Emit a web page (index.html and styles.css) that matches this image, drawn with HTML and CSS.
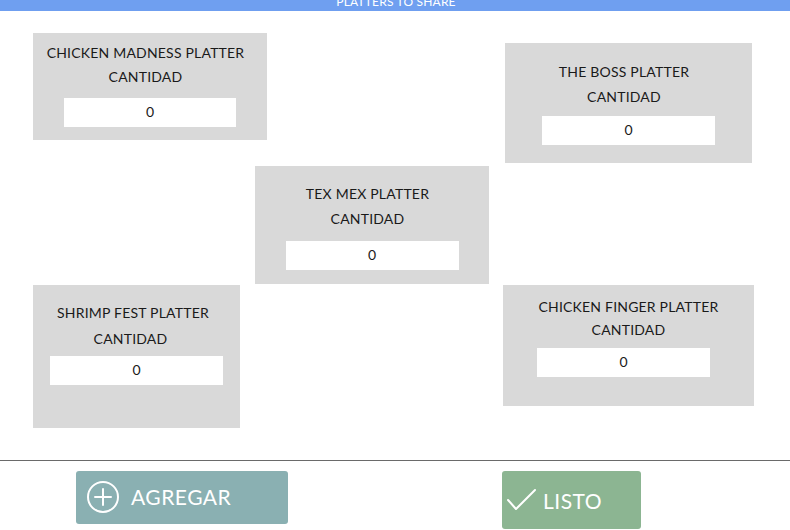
FILE: index.html
```html
<!DOCTYPE html>
<html lang="es">
<head>
<meta charset="utf-8">
<title>Platters to share</title>
<link rel="stylesheet" href="styles.css">
</head>
<body>
<header class="topbar"><span class="topbar-title">PLATTERS TO SHARE</span></header>
<main class="board">
  <div class="row row-1">
    <section class="card card-1">
      <div class="card-title">CHICKEN MADNESS PLATTER</div>
      <div class="card-label">CANTIDAD</div>
      <div class="qty">0</div>
    </section>
    <section class="card card-2">
      <div class="card-title">THE BOSS PLATTER</div>
      <div class="card-label">CANTIDAD</div>
      <div class="qty">0</div>
    </section>
  </div>
  <div class="row row-2">
    <section class="card card-3">
      <div class="card-title">TEX MEX PLATTER</div>
      <div class="card-label">CANTIDAD</div>
      <div class="qty">0</div>
    </section>
  </div>
  <div class="row row-3">
    <section class="card card-4">
      <div class="card-title">SHRIMP FEST PLATTER</div>
      <div class="card-label">CANTIDAD</div>
      <div class="qty">0</div>
    </section>
    <section class="card card-5">
      <div class="card-title">CHICKEN FINGER PLATTER</div>
      <div class="card-label">CANTIDAD</div>
      <div class="qty">0</div>
    </section>
  </div>
</main>
<footer class="footer">
  <button class="btn btn-add">
    <svg class="btn-icon" width="34" height="34" viewBox="0 0 34 34"><circle cx="17" cy="17" r="15" fill="none" stroke="#fff" stroke-width="2"/><path d="M17 9v16M9 17h16" stroke="#fff" stroke-width="2" stroke-linecap="round"/></svg>
    <span>AGREGAR</span>
  </button>
  <button class="btn btn-done">
    <svg class="btn-icon" width="32" height="24" viewBox="0 0 32 24"><path d="M2 12l8 9L29 2" fill="none" stroke="#fff" stroke-width="2" stroke-linecap="round" stroke-linejoin="round"/></svg>
    <span>LISTO</span>
  </button>
</footer>
</body>
</html>
```

FILE: styles.css
```css
* { box-sizing: border-box; }
html, body { margin: 0; padding: 0; background: #fff; }
body {
  width: 790px;
  height: 530px;
  overflow: hidden;
  font-family: "Lato", "Liberation Sans", sans-serif;
  color: #1a1a1a;
}
.topbar {
  height: 11px;
  background: #6f9ff0;
  overflow: hidden;
  text-align: center;
}
.topbar-title {
  display: block;
  color: #fff;
  font-size: 12px;
  line-height: 12px;
  letter-spacing: 0.2px;
  margin-top: -4px;
  padding-left: 2px;
}
.board { display: flex; flex-direction: column; }
.row { display: flex; align-items: flex-start; }
.row-1 { margin-top: 22px; }
.card {
  background: #d9d9d9;
  display: flex;
  flex-direction: column;
  align-items: center;
}
.card-title, .card-label {
  font-size: 14px;
  line-height: 24px;
  letter-spacing: 0.2px;
  white-space: nowrap;
  padding-right: 9px;
}
.qty {
  background: #fff;
  width: 172px;
  height: 29px;
  font-size: 14px;
  line-height: 28px;
  text-align: center;
}
.card-1 { margin-left: 33px; width: 234px; height: 107px; padding-top: 8px; }
.card-1 .qty { margin-top: 9px; }
.card-2 { margin-left: auto; margin-right: 38px; margin-top: 10px; width: 247px; height: 120px; padding-top: 17px; }
.card-2 .card-label { margin-top: 1px; }
.card-2 .qty { margin-top: 7px; width: 173px; }
.card-3 { margin-left: 255px; margin-top: 3px; width: 234px; height: 118px; padding-top: 16px; }
.card-3 .card-label { margin-top: 1px; }
.card-3 .qty { margin-top: 10px; width: 173px; }
.card-4 { margin-left: 33px; margin-top: 1px; width: 207px; height: 143px; padding-top: 16px; }
.card-4 .card-title { padding-right: 7px; }
.card-4 .card-label { margin-top: 2px; padding-right: 12px; }
.card-4 .qty { margin-top: 5px; width: 173px; }
.card-5 { margin-left: auto; margin-right: 36px; margin-top: 1px; width: 251px; height: 121px; padding-top: 10px; }
.card-5 .card-title, .card-5 .card-label { padding-right: 0; }
.card-5 .card-label { margin-top: -1px; }
.card-5 .qty { margin-top: 6px; margin-right: 10px; width: 173px; }

.footer {
  margin-top: 32px;
  border-top: 1px solid #6a6a6a;
  display: flex;
  align-items: flex-start;
  padding-top: 10px;
}
.btn {
  border: none;
  border-radius: 3px;
  color: #fff;
  font-family: "Lato", "Liberation Sans", sans-serif;
  font-size: 21px;
  letter-spacing: 0.5px;
  display: flex;
  align-items: center;
  padding: 0;
  cursor: pointer;
}
.btn-add {
  margin-left: 76px;
  width: 212px;
  height: 53px;
  background: #8ab0b2;
  padding-left: 10px;
  padding-bottom: 2px;
  gap: 11px;
}
.btn-done {
  margin-left: 214px;
  width: 139px;
  height: 58px;
  background: #8cb592;
  padding-left: 4px;
  gap: 5px;
}
```
